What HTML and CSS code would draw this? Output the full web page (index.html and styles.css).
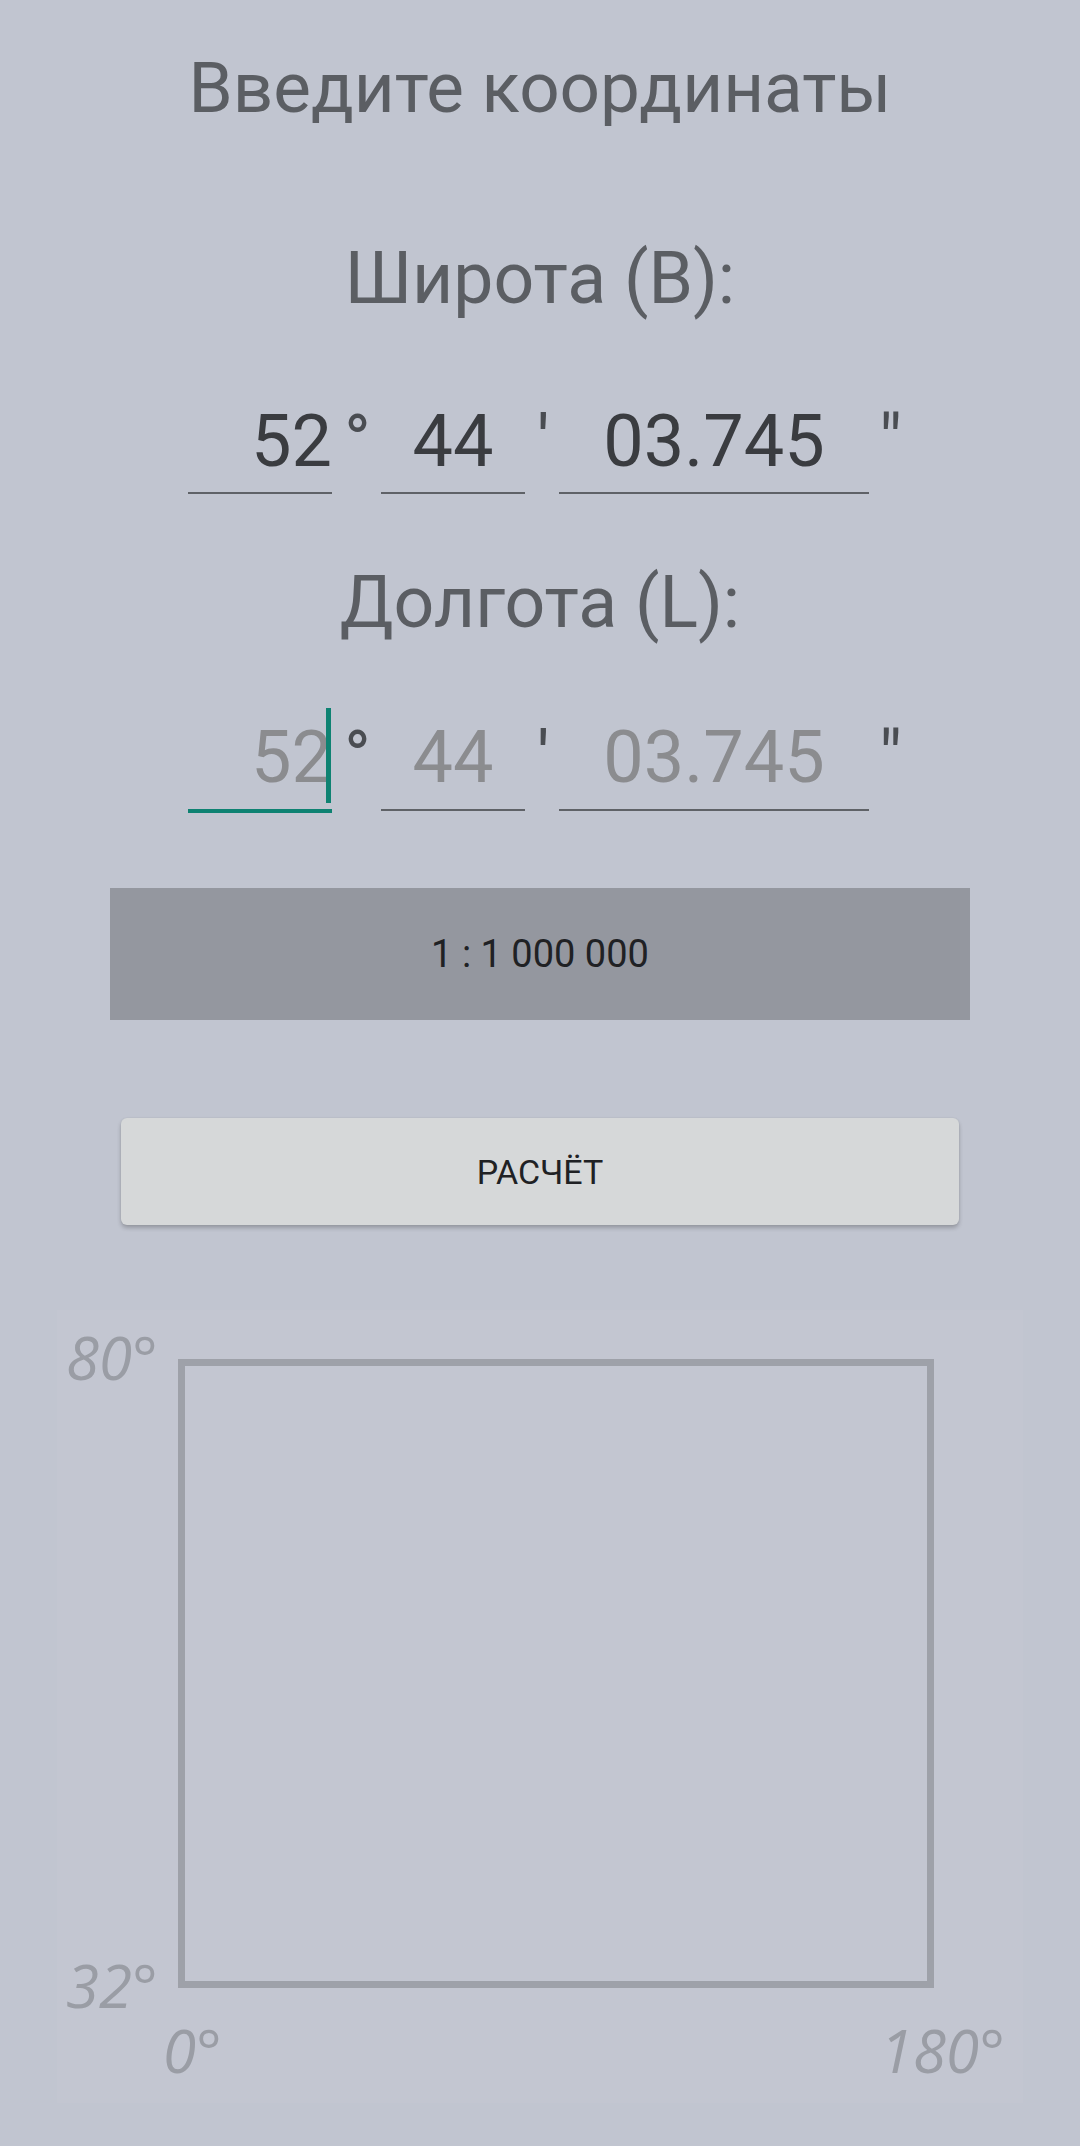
FILE: index.html
```html
<!DOCTYPE html>
<html lang="ru">
<head>
<meta charset="utf-8">
<title>Координаты</title>
<link rel="stylesheet" href="styles.css">
</head>
<body>
<main class="screen">
  <h1 class="title">Введите координаты</h1>
  <h2 class="label label-b">Широта (В):</h2>
  <div class="coord-row row-b">
    <div class="field f-deg value">52</div>
    <span class="sym sym-deg">°</span>
    <div class="field f-min value">44</div>
    <span class="sym sym-min">'</span>
    <div class="field f-sec value">03.745</div>
    <span class="sym sym-sec">"</span>
  </div>
  <h2 class="label label-l">Долгота (L):</h2>
  <div class="coord-row row-l">
    <div class="field f-deg hint focused">52<span class="cursor"></span></div>
    <span class="sym sym-deg">°</span>
    <div class="field f-min hint">44</div>
    <span class="sym sym-min">'</span>
    <div class="field f-sec hint">03.745</div>
    <span class="sym sym-sec">"</span>
  </div>
  <div class="scale">1 : 1 000 000</div>
  <button class="calc" type="button">РАСЧЁТ</button>
  <div class="chart">
    <svg class="chart-svg" width="966" height="793" viewBox="0 0 966 793">
      <rect x="124.5" y="52.5" width="749" height="622" fill="none" stroke="#9ea1a9" stroke-width="7"/>
      <text class="axis" x="9" y="70">80°</text>
      <text class="axis" x="9" y="698">32°</text>
      <text class="axis" x="106" y="763">0°</text>
      <text class="axis" x="823" y="763">180°</text>
    </svg>
  </div>
</main>
</body>
</html>
```

FILE: styles.css
```css
html, body {
  margin: 0;
  padding: 0;
}
body {
  width: 1080px;
  height: 2146px;
  background: #c1c5d0;
  font-family: Roboto, "Noto Sans", "Liberation Sans", sans-serif;
  overflow: hidden;
}
.screen {
  display: flex;
  flex-direction: column;
  align-items: center;
}
.title {
  margin: 53px 0 0;
  font-size: 71px;
  line-height: 70px;
  font-weight: 400;
  color: #5b5e63;
}
.label {
  margin: 0;
  font-size: 71.5px;
  line-height: 70px;
  font-weight: 400;
  color: #5b5e63;
}
.label-b { margin-top: 121px; }
.label-l { margin-top: 74px; }

.coord-row {
  align-self: flex-start;
  display: flex;
  align-items: flex-start;
  margin-left: 188px;
  font-size: 72px;
  line-height: 72px;
}
.row-b { margin-top: 92px; }
.row-l { margin-top: 84px; }

.field {
  position: relative;
  box-sizing: content-box;
  border-bottom: 2px solid #5f6267;
  padding-bottom: 14px;
  white-space: nowrap;
}
.row-l .field { padding-bottom: 15px; }
.f-deg { width: 144px; text-align: right; }
.f-min { width: 144px; text-align: center; }
.f-sec { width: 310px; text-align: center; }
.value { color: #3a3c40; }
.hint { color: #8b8c8f; }
.field.focused { border-bottom: 4px solid #0e8272; }
.cursor {
  position: absolute;
  left: 138px;
  top: -14px;
  width: 5px;
  height: 95px;
  background: #0e8272;
}

.sym {
  color: #4a4d52;
  white-space: pre;
  box-sizing: border-box;
  flex: none;
}
.sym-deg { width: 49px; padding-left: 12px; }
.sym-min { width: 34px; padding-left: 12px; }
.sym-sec { padding-left: 10px; }

.scale {
  margin-top: 75px;
  width: 860px;
  height: 132px;
  background: #94979f;
  display: flex;
  align-items: center;
  justify-content: center;
  font-size: 38px;
  color: #202124;
}

.calc {
  margin-top: 98px;
  width: 838px;
  height: 107px;
  border: none;
  border-radius: 6px;
  background: #d6d8d9;
  box-shadow: 0 3px 4px rgba(0, 0, 0, 0.22), 0 0 2px rgba(0, 0, 0, 0.08);
  font-family: Roboto, "Noto Sans", "Liberation Sans", sans-serif;
  font-size: 34px;
  color: #202124;
  padding: 0;
}

.chart {
  margin-top: 85px;
  width: 966px;
  height: 793px;
  background: #c3c6d1;
}
.chart-svg {
  display: block;
}
.axis {
  font-family: "Open Sans", "Noto Sans", sans-serif;
  font-style: italic;
  font-size: 60px;
  fill: #9a9da5;
}
```
